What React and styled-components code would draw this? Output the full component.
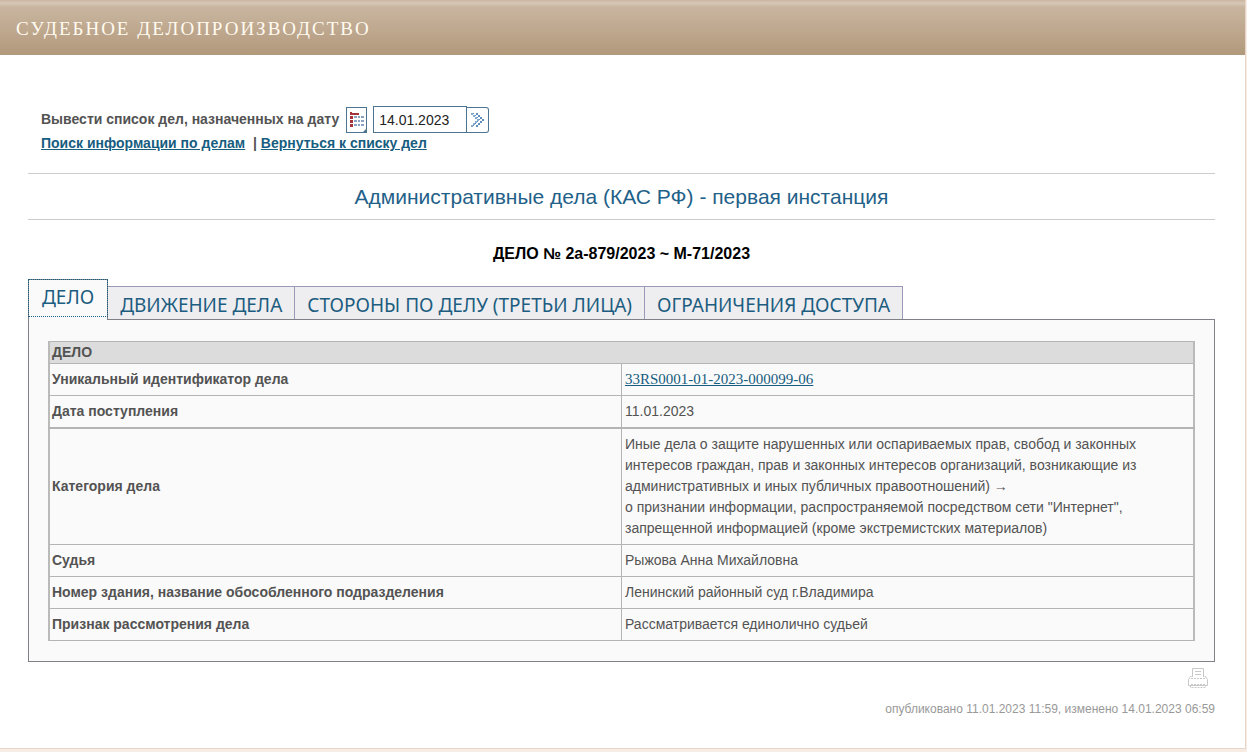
import React, { useState } from "react";
import styled, { createGlobalStyle } from "styled-components";

const GlobalStyle = createGlobalStyle`
  *, *::before, *::after { box-sizing: border-box; }
  html { background: #f8ede4; }
  body {
    margin: 0;
    color: #535353;
    font: 14px/21px "Liberation Sans", Arial, sans-serif;
  }
`;

const Page = styled.div`
  min-height: calc(100vh - 4px);
  margin-right: 1px;
  padding-bottom: 28px;
  background: #fff;
  border-right: 1px solid #e6d6ca;
  border-bottom: 1px solid #e6d6ca;
`;

const Header = styled.header`
  height: 55px;
  padding: 2px 16px 0;
  display: flex;
  align-items: center;
  background: linear-gradient(#c9b5a0 0, #d8c8b7 3px, #c9b5a0 7px, #b1997b 100%);
`;

const SiteTitle = styled.h1`
  margin: 0;
  color: #fffaf0;
  font: 19px/24px "Liberation Serif", "Times New Roman", serif;
  letter-spacing: 2px;
  text-transform: uppercase;
`;

const Content = styled.main`
  padding: 51px 30px 0 28px;
`;

const SearchForm = styled.form`
  margin: 0 13px;
  display: flex;
  align-items: center;
  font-weight: bold;
`;

const DateLabel = styled.label`
  margin-right: 7px;
`;

const IconButton = styled.button`
  width: ${(p) => p.$width}px;
  height: 26px;
  margin: 0;
  padding: 0;
  display: grid;
  place-items: center;
  background: #fff;
  border: 1px solid #4c7490;
  border-radius: ${(p) => p.$radius};
  border-left-width: ${(p) => (p.$joined ? 0 : 1)}px;
`;

const DateInput = styled.input`
  width: 94px;
  height: 27px;
  margin-left: 6px;
  padding: 0 5px;
  color: #222;
  background: #fff;
  border: 1px solid #4c7490;
  font: 14px/21px "Liberation Sans", Arial, sans-serif;
`;

const QuickLinks = styled.nav`
  margin: 0 13px;
  font-weight: bold;
  white-space: pre;
`;

const Link = styled.a`
  color: #175d80;
  text-decoration: underline;
`;

const CodeLink = styled(Link)`
  font-family: "Liberation Serif", "Times New Roman", serif;
  font-size: 15px;
`;

const SectionTitle = styled.h2`
  margin: 19px 0 0;
  padding: 10px 0;
  color: #1f6188;
  border-top: 1px solid #ccc;
  border-bottom: 1px solid #ccc;
  font-size: 21px;
  font-weight: normal;
  line-height: 25px;
  text-align: center;
`;

const CaseNumber = styled.h3`
  margin: 23px 0 15px;
  color: #000;
  font-size: 16px;
  line-height: 21px;
  text-align: center;
`;

const TabList = styled.div`
  display: flex;
  align-items: flex-end;
`;

const Tab = styled.button`
  height: ${(p) => (p.$active ? 41 : 33)}px;
  margin: 0 0 ${(p) => (p.$active ? -1 : 0)}px;
  padding: ${(p) => (p.$active ? "0 13px 6px" : "3px 12px 0")};
  position: relative;
  color: #1c5d80;
  background: ${(p) => (p.$active ? "#fafafa" : "#eeeef0")};
  border: 1px solid ${(p) => (p.$active ? "#808088" : "#9a9ab8")};
  border-width: 1px 1px 0 ${(p) => (p.$first ? 1 : 0)}px;
  font: 19px/24px "Noto Sans", "Open Sans", sans-serif;
  text-transform: uppercase;
  white-space: nowrap;

  &[aria-selected="true"]::after {
    content: "";
    position: absolute;
    inset: -1px -1px 3px;
    border: 1px dotted #175d80;
  }
`;

const Panel = styled.section`
  padding: 21px 19px 20px;
  background: #fafafa;
  border: 1px solid #808088;
`;

const CaseTable = styled.table`
  width: 100%;
  table-layout: fixed;
  border-collapse: collapse;
  border: 2px solid #bababa;
  border-top-width: 1px;
  border-bottom-width: 1px;
`;

const TableHeading = styled.th`
  height: 22px;
  padding: 0 2px;
  background: #dcdcdc;
  border: 1px solid #b4b4b4;
  text-align: left;
`;

const NameCell = styled.th`
  padding: 5px 2px;
  border: 1px solid #b4b4b4;
  border-top-width: ${(p) => (p.$ruled ? 2 : 1)}px;
  text-align: left;
`;

const ValueCell = styled.td`
  padding: 5px 40px 5px 3px;
  border: 1px solid #b4b4b4;
  border-top-width: ${(p) => (p.$ruled ? 2 : 1)}px;
`;

const Footer = styled.footer`
  padding-top: 5px;
  display: flex;
  flex-direction: column;
  align-items: flex-end;
  gap: 10px;
  color: #999;
  font-size: 12px;
`;

const PrintButton = styled.button`
  width: 22px;
  height: 22px;
  margin: 0 6px 0 0;
  padding: 0;
  background: none;
  border: 0;
`;

const Published = styled.p`
  margin: 0;
`;

function CalendarIcon() {
  return (
    <svg width="19" height="24" viewBox="0 0 19 24" aria-hidden="true">
      <path d="M3 4h2v1h7v2H3z" fill="#a5343a" />
      {[8, 12, 16].map((y) => (
        <g key={y}>
          <rect x="3" y={y} width="3" height="3" fill="#a5343a" />
          <rect x="7" y={y} width="3" height="2" fill="#8aa2c4" />
          <rect x="11" y={y} width="2" height="2" fill="#8aa2c4" />
          <rect x="14" y={y} width="3" height="2" fill="#8aa2c4" />
        </g>
      ))}
      <path d="M16 24l3-3v3z" fill="#4c7490" />
    </svg>
  );
}

function GoIcon() {
  const dots = [0, 1, 2, 3, 2, 1, 0];
  return (
    <svg width="15" height="15" viewBox="0 0 15 15" aria-hidden="true">
      {dots.map((x, i) => (
        <g key={i}>
          <rect x={1 + x * 2} y={1 + i * 2} width="2" height="2" fill="#86add0" />
          <rect x={3 + x * 2} y={1 + i * 2} width="1" height="1" fill="#5d8fbc" />
          <rect x={6 + x * 2} y={1 + i * 2} width="2" height="2" fill="#5d8fbc" />
        </g>
      ))}
    </svg>
  );
}

function PrinterIcon() {
  return (
    <svg width="22" height="22" viewBox="0 0 22 22" fill="none" stroke="#c8c8c8" aria-hidden="true">
      <path d="M5.500 10V1.500h11V10M8 4.500h6M8 7.500h6" />
      <path d="M4.500 9.500h-1l-2 3v6h19v-6l-2-3h-1" />
      <path d="M4 11.500h14M3.500 18.500v2h15v-2M4 17.500h14" strokeDasharray="2 1" />
    </svg>
  );
}

const tabs = ["Дело", "Движение дела", "Стороны по делу (третьи лица)", "Ограничения доступа"];

const rows = [
  { name: "Уникальный идентификатор дела", value: <CodeLink href="#uid">33RS0001-01-2023-000099-06</CodeLink> },
  { name: "Дата поступления", value: "11.01.2023" },
  {
    name: "Категория дела",
    ruled: true,
    value: (
      <>
        Иные дела о защите нарушенных или оспариваемых прав, свобод и законных интересов граждан, прав и законных
        интересов организаций, возникающие из административных и иных публичных правоотношений) →
        <br />
        о признании информации, распространяемой посредством сети "Интернет", запрещенной информацией (кроме
        экстремистских материалов)
      </>
    ),
  },
  { name: "Судья", value: "Рыжова Анна Михайловна" },
  { name: "Номер здания, название обособленного подразделения", value: "Ленинский районный суд г.Владимира" },
  { name: "Признак рассмотрения дела", value: "Рассматривается единолично судьей" },
];

export default function App() {
  const [date, setDate] = useState("14.01.2023");
  const [active, setActive] = useState(0);

  return (
    <>
      <GlobalStyle />
      <Page>
        <Header>
          <SiteTitle>Судебное делопроизводство</SiteTitle>
        </Header>
        <Content>
          <SearchForm onSubmit={(e) => e.preventDefault()}>
            <DateLabel htmlFor="date">Вывести список дел, назначенных на дату</DateLabel>
            <IconButton type="button" $width={21} $radius="0" aria-label="Календарь">
              <CalendarIcon />
            </IconButton>
            <DateInput id="date" value={date} onChange={(e) => setDate(e.target.value)} />
            <IconButton type="submit" $width={22} $radius="0 3px 3px 0" $joined aria-label="Показать">
              <GoIcon />
            </IconButton>
          </SearchForm>
          <QuickLinks>
            <Link href="#search">Поиск информации по делам</Link>
            {"  | "}
            <Link href="#list">Вернуться к списку дел</Link>
          </QuickLinks>

          <SectionTitle>Административные дела (КАС РФ) - первая инстанция</SectionTitle>
          <CaseNumber>ДЕЛО № 2а-879/2023 ~ М-71/2023</CaseNumber>

          <TabList role="tablist">
            {tabs.map((name, i) => (
              <Tab
                key={name}
                type="button"
                role="tab"
                aria-selected={i === active}
                $active={i === active}
                $first={i === 0}
                onClick={() => setActive(i)}
              >
                {name}
              </Tab>
            ))}
          </TabList>
          <Panel role="tabpanel">
            <CaseTable>
              <thead>
                <tr>
                  <TableHeading colSpan={2}>ДЕЛО</TableHeading>
                </tr>
              </thead>
              <tbody>
                {rows.map(({ name, value, ruled }) => (
                  <tr key={name}>
                    <NameCell scope="row" $ruled={ruled}>{name}</NameCell>
                    <ValueCell $ruled={ruled}>{value}</ValueCell>
                  </tr>
                ))}
              </tbody>
            </CaseTable>
          </Panel>

          <Footer>
            <PrintButton type="button" aria-label="Печать">
              <PrinterIcon />
            </PrintButton>
            <Published>опубликовано 11.01.2023 11:59, изменено 14.01.2023 06:59</Published>
          </Footer>
        </Content>
      </Page>
    </>
  );
}
